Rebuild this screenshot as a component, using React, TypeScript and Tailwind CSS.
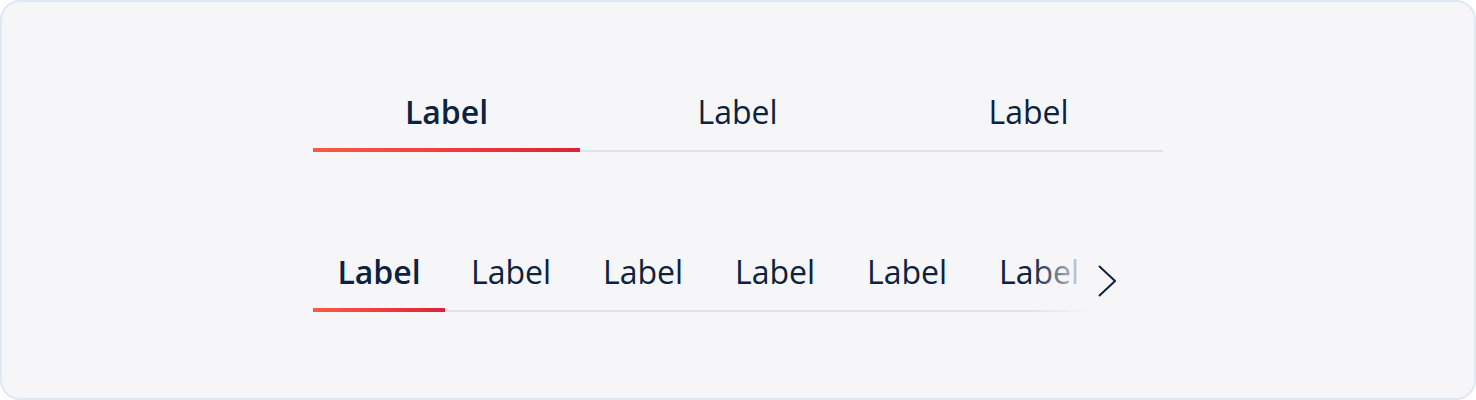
import { useState } from "react";

const WIDE = ["Label", "Label", "Label"];
const SCROLL = ["Label", "Label", "Label", "Label", "Label", "Label"];

const FONT = "font-['Open_Sans',_'Noto_Sans',_sans-serif]";

function Indicator() {
  return (
    <span className="absolute left-0 right-0 -bottom-[2px] h-[4px] bg-gradient-to-r from-[#f65b45] via-[#f43a40] to-[#dc2239]" />
  );
}

export default function App() {
  const [wide, setWide] = useState(0);
  const [scroll, setScroll] = useState(0);

  return (
    <div className={`h-[400px] w-full rounded-[20px] border-2 border-[#e0e8f3] bg-[#f6f6f9] pt-[88px] ${FONT}`}>
      <div className="mx-auto flex w-[850px] flex-col gap-[98px]">

        {/* ── Fixed-width tabs ─────────────────────────────────── */}
        <div className="flex gap-[24px] border-b-2 border-[#dbe5f1]">
          {WIDE.map((label, i) => (
            <button
              key={i}
              onClick={() => setWide(i)}
              className={`relative w-[267px] shrink-0 pb-[16px] text-center text-[32px] leading-[44px] text-[#0b2340] ${
                wide === i ? "font-semibold" : "font-normal"
              }`}
            >
              {label}
              {wide === i && <Indicator />}
            </button>
          ))}
        </div>

        {/* ── Scrollable tabs ──────────────────────────────────── */}
        <div className="flex items-start">
          <div className="relative w-[776px] border-b-2 border-[#dbe5f1]">
            <div className="flex">
              {SCROLL.map((label, i) => (
                <button
                  key={i}
                  onClick={() => setScroll(i)}
                  className={`relative w-[132px] shrink-0 pb-[16px] text-center text-[32px] leading-[44px] text-[#0b2340] ${
                    scroll === i ? "font-semibold" : "font-normal"
                  }`}
                >
                  {label}
                  {scroll === i && <Indicator />}
                </button>
              ))}
            </div>
            <div className="pointer-events-none absolute right-0 top-0 -bottom-[2px] w-[56px] bg-gradient-to-r from-[#f6f6f9]/0 to-[#f6f6f9]" />
          </div>
          <button className="relative flex h-[60px] w-[36px] items-center justify-center pt-[2px] text-[#0b2340]" aria-label="Next">
            <svg width="18" height="32" viewBox="0 0 18 32" fill="none" stroke="currentColor" strokeWidth={2}>
              <path d="M1 1l16 15L1 31" />
            </svg>
          </button>
        </div>
      </div>
    </div>
  );
}
